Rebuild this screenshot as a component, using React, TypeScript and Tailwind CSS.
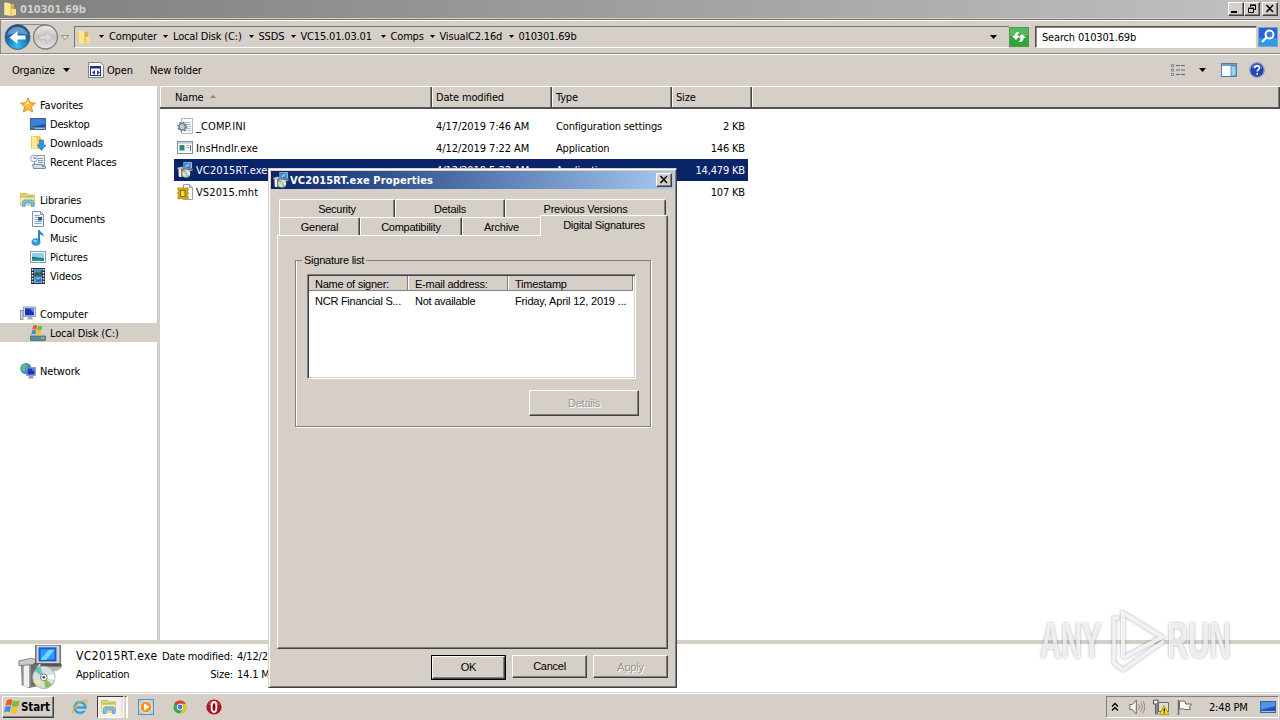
import React from "react";

const SANS = "font-['DejaVu_Sans_Condensed','DejaVu_Sans',sans-serif]";
const MSS = "font-['Liberation_Sans',Arial,sans-serif]";

/* ---------- icons ---------- */
type IconProps = { className?: string };

const Folder = ({ className = "w-4 h-4" }: IconProps) => (
  <svg viewBox="0 0 16 16" className={className}>
    <path d="M2 2h5l1 1v11H2z" fill="#f3cf62" />
    <path d="M7 3h5v11H7z" fill="#e2b43c" />
    <path d="M3 1l6 2v12l-6-1z" fill="#fbe795" />
    <path d="M9 8h5v6l-5 1z" fill="#f7e08d" />
    <path d="M9 3v12" stroke="#d3a534" strokeWidth=".8" />
  </svg>
);
const Star = () => (
  <svg viewBox="0 0 16 16" className="h-4 w-4">
    <path d="M8 .8l2.1 4.9 5.3.5-4 3.6 1.2 5.2L8 12.300 3.400 15l1.200-5.200-4-3.600 5.300-.5z" fill="#fcbf3d" stroke="#e08a1e" strokeWidth="1" />
    <path d="M8 3l1.300 3.600L5 8z" fill="#fff0b0" />
  </svg>
);
const Desktop = () => (
  <svg viewBox="0 0 16 16" className="h-4 w-4">
    <rect x=".5" y="2.500" width="15" height="11" fill="#1c4fa8" stroke="#3c5f96" />
    <path d="M1 3h14v5L1 11z" fill="#3f7fdc" />
    <rect x="1" y="11.500" width="14" height="1.500" fill="#9fb6d4" />
    <rect x="1" y="11.500" width="4" height="1.500" fill="#2d8c4a" />
  </svg>
);
const Downloads = () => (
  <svg viewBox="0 0 16 16" className="h-4 w-4">
    <path d="M1 1h8l2 1v12H1z" fill="#f0c65a" />
    <path d="M2 1l5 2v12l-5-1z" fill="#fce99b" />
    <path d="M9.500 5h4v5H16l-4.500 5.500L7 10h2.500z" fill="#2f93de" stroke="#1c6fb5" strokeWidth=".6" />
  </svg>
);
const Recent = () => (
  <svg viewBox="0 0 16 16" className="h-4 w-4">
    <path d="M4.500 1.500h10v10h-10z" fill="#e9eff5" stroke="#8695a5" />
    <path d="M7 4.500h6M8 6.500h5M8 8.500h5" stroke="#7f9bb8" />
    <circle cx="4" cy="4.500" r="3.400" fill="#f4f7fa" stroke="#93a5b8" />
    <path d="M4 2.500v2h2" stroke="#47617c" fill="none" strokeWidth=".8" />
    <path d="M2.500 10.500h10v2h3v2h-12z" fill="#d2dde8" stroke="#7c8fa2" />
  </svg>
);
const Library = ({ className = "h-4 w-4" }: IconProps) => (
  <svg viewBox="0 0 16 16" className={className}>
    <path d="M.5 1.500h6l1 1.500h7v10H.5z" fill="#f2d16b" stroke="#cfa63c" strokeWidth=".8" />
    <path d="M2 4h11v3H2z" fill="#8fd06a" />
    <path d="M.5 5.500h14v7H.5z" fill="#fbe9a4" />
    <path d="M2.500 14.500v-5l1.500-1.500h8.500l1.500 1.500v5h-2.500v-3.500H5v3.500z" fill="#79c3ee" stroke="#4691c4" strokeWidth=".7" />
  </svg>
);
const Doc = () => (
  <svg viewBox="0 0 16 16" className="h-4 w-4">
    <path d="M2.500.5h8l3 3v12h-11z" fill="#f8fafd" stroke="#7d93a8" />
    <path d="M10.500.5v3h3" fill="none" stroke="#7d93a8" />
    <path d="M4.500 4.500h5M4.500 6.500h3M4.500 8.500h3M4.500 10.500h7M4.500 12.500h7" stroke="#7fa2c8" />
    <rect x="8" y="6" width="4" height="3.500" fill="#28549c" />
  </svg>
);
const Music = () => (
  <svg viewBox="0 0 16 16" className="h-4 w-4">
    <path d="M8 0h1.700c.3 2.500 4.300 2.800 4.100 7-.9-2-2.300-2.400-3.800-2.600V12H8z" fill="#2488cf" />
    <ellipse cx="6" cy="12" rx="4.100" ry="3.300" fill="#2b9be0" stroke="#176dab" strokeWidth=".6" />
    <ellipse cx="5.200" cy="11" rx="2" ry="1.200" fill="#8fd2f8" />
  </svg>
);
const Picture = () => (
  <svg viewBox="0 0 16 16" className="h-4 w-4">
    <rect x=".5" y="2.500" width="15" height="11" fill="#fff" stroke="#8a9bab" />
    <rect x="2" y="4" width="12" height="8" fill="#8cd0f2" />
    <path d="M2 8c3-1 5 1 12 1v3H2z" fill="#1d6f8e" />
    <path d="M2 10c4-1 7 1 12 0v2H2z" fill="#2f9a70" />
  </svg>
);
const Video = () => (
  <svg viewBox="0 0 16 16" className="h-4 w-4">
    <rect x="1" y="0" width="14" height="16" fill="#26303c" />
    <rect x="4" y="1" width="8" height="6.500" fill="#4c93d0" />
    <rect x="4" y="8.500" width="8" height="6.500" fill="#67b2e4" />
    <path d="M4 6l3-3 2 2 3-3v5.500H4z" fill="#315f5c" />
    <path d="M5 9l3 3 3-2v4H6z" fill="#2f6fb4" />
    <path d="M2.500 1v15M13.500 1v15" stroke="#fff" strokeWidth="1.500" strokeDasharray="1.500 1.500" />
  </svg>
);
const Computer = () => (
  <svg viewBox="0 0 16 16" className="h-4 w-4">
    <rect x=".5" y="4.500" width="2.500" height="9" fill="#cfd8df" stroke="#74828f" strokeWidth=".8" />
    <rect x="3.500" y="1" width="12" height="9.500" fill="#d5dbe6" stroke="#7f8da5" strokeWidth=".8" />
    <rect x="5" y="2.300" width="9" height="7" fill="#1b30b9" />
    <path d="M9 2.300h5V7z" fill="#5f80ec" />
    <path d="M8 11h4l1 2.500H7z" fill="#a4afc0" />
  </svg>
);
const Flag = ({ className = "h-4 w-4" }: IconProps) => (
  <svg viewBox="0 0 16 16" className={className}>
    <path d="M2.900 1.300C5 -.2 6.800.2 8.400 1.200L7.200 6.800C5.400 5.800 3.600 5.800 1.500 7z" fill="#ee5a24" />
    <path d="M9.100 1.600c2 1 4.200.9 6.700-.4l-1.500 5.700c-2.200 1.300-4.400 1.300-6.400.3z" fill="#7dbb32" />
    <path d="M1.300 7.900c2-1.300 3.900-1.300 5.700-.2l-1.300 5.600C4 12.200 2.200 12.300 0 13.600z" fill="#3b8ee0" />
    <path d="M7.700 8.200c2 .9 4.200.9 6.400-.3l-1.400 5.700c-2.200 1.200-4.300 1.100-6.300.1z" fill="#fbc21c" />
  </svg>
);
const Disk = () => (
  <svg viewBox="0 0 16 16" className="h-4 w-4">
    <path d="M2 9h12l1.500 3H.5z" fill="#c3ced6" />
    <rect x=".5" y="11" width="15" height="4.500" fill="#5b8a93" stroke="#456570" strokeWidth=".7" />
    <rect x="11" y="12.500" width="3" height="1" fill="#7dff7a" />
    <path d="M3 .8C4.700-.2 5.800 0 7.300.6L6.500 4.500C5 4 3.800 4 2.300 5z" fill="#ee5a24" />
    <path d="M7.900.8c1.500.7 3 .6 4.500-.2l-.8 4.200c-1.500.7-3 .7-4.500 0z" fill="#7dbb32" />
    <path d="M2.100 5.600c1.500-.8 2.800-.8 4.200-.2L5.500 9.500C4.200 8.900 2.900 8.900 1.300 9.800z" fill="#3b8ee0" />
    <path d="M7 5.600c1.500.6 2.900.6 4.400 0l-.8 4.200c-1.400.7-2.900.7-4.300 0z" fill="#fbc21c" />
  </svg>
);
const Network = () => (
  <svg viewBox="0 0 16 16" className="h-4 w-4">
    <circle cx="5.800" cy="5.500" r="5.500" fill="#2b86d8" />
    <path d="M2 2c3-2 5-1 6 1L5 5l1 3-3 1C1 7 1 4 2 2z" fill="#5cc07a" />
    <rect x="6.500" y="4.500" width="9" height="8" fill="#dde4ee" stroke="#6b7c94" strokeWidth=".7" />
    <rect x="7.300" y="5.300" width="7.400" height="6.400" fill="#1c33c3" />
    <path d="M11 5.500h3.500v3.500z" fill="#6b8af0" />
    <path d="M9 13h4l1 2.500H8z" fill="#8f9db0" />
  </svg>
);
const Installer = ({ className = "h-4 w-4" }: IconProps) => (
  <svg viewBox="0 0 48 48" className={className}>
    <path d="M3 19l8-3 9 2v26l-8 2-8-3z" fill="#8a8a8a" />
    <path d="M6 20h6v25l-6-1z" fill="#f0f0f0" />
    <path d="M14 18h8v26h-8z" fill="#6d6d6d" />
    <path d="M1 17l13-3 9 3-8 4-14 1z" fill="#c9c9c9" stroke="#666" strokeWidth=".8" />
    <path d="M20 22h23l4-2v4l-6 4H20z" fill="#b5b5b5" />
    <path d="M24 20h22v3H24z" fill="#555" />
    <path d="M19 0h26v20H19z" fill="#d2d2d8" stroke="#4a4a4a" strokeWidth="1.200" />
    <rect x="22" y="2.500" width="19" height="15" fill="#1457d9" />
    <rect x="24" y="4.500" width="15" height="11" fill="#2f9af5" />
    <path d="M26 13l7-8h6l-9 11h-6z" fill="#6fd6ff" />
    <circle cx="27.500" cy="34.500" r="12" fill="#d7e0dc" stroke="#8c9c98" strokeWidth=".8" />
    <path d="M27.500 34.500L18 28a11 11 0 0 1 6-4.500z" fill="#63c6c0" />
    <path d="M27.500 34.500L36 42a11 11 0 0 1-7 4z" fill="#8dbf57" />
    <path d="M27.500 34.500L38 31a11 11 0 0 1 1 6z" fill="#fff" />
    <path d="M27.500 34.500L17 38a11 11 0 0 0 4 6z" fill="#e8e8a8" />
    <circle cx="27.500" cy="34.500" r="3.600" fill="#fff" stroke="#777" />
    <circle cx="27.500" cy="34.500" r="1.500" fill="#555" />
  </svg>
);
const IniFile = () => (
  <svg viewBox="0 0 16 16" className="h-4 w-4">
    <path d="M4.500.5h11v15h-11z" fill="#f6f8fa" stroke="#98a5b2" strokeDasharray="2 .6" />
    <path d="M7 4.500h7M8 6.500h6M9 8.500h5M9 10.500h5M7 12.500h7" stroke="#b7c3cf" />
    <circle cx="5.200" cy="8.700" r="3.200" fill="#dfe6ec" stroke="#6d7f90" strokeWidth="1.500" />
    <circle cx="5.200" cy="8.700" r="4.600" fill="none" stroke="#6d7f90" strokeWidth="1.200" strokeDasharray="1.600 2" />
    <circle cx="5.200" cy="8.700" r="1.200" fill="#fff" stroke="#6d7f90" strokeWidth=".6" />
  </svg>
);
const ExeFile = () => (
  <svg viewBox="0 0 16 16" className="h-4 w-4">
    <rect x=".5" y="1.500" width="15" height="12" fill="#fff" stroke="#7f8c99" />
    <rect x="1" y="2" width="14" height="2" fill="#cbd6e0" />
    <rect x="2.500" y="5" width="5" height="5.500" fill="#2f8374" />
    <path d="M9 5.500h3M9 7.500h3" stroke="#a9b6c2" />
    <path d="M13.500 5v6" stroke="#4f74b8" />
  </svg>
);
const MhtFile = () => (
  <svg viewBox="0 0 16 16" className="h-4 w-4">
    <path d="M6.500.5h6l3 3v12h-9z" fill="#fbfbfb" stroke="#98a0a8" />
    <path d="M12.500.5v3h3" fill="none" stroke="#98a0a8" />
    <path d="M0 4.500l2-1.500 2 1 2-1 2 1 2-1 2 1.500-1 2.500 1 2-1 2.500 1 3-2 1-2-.8-2 .8-2-.8-2 .8-2-1 1-3-1-2.500 1-2z" fill="#c9a017" />
    <path d="M3.500 6.500h4.500v6H3.500z" fill="#f6d94c" stroke="#8e7010" />
  </svg>
);

const Caret = ({ className = "" }: IconProps) => (
  <svg viewBox="0 0 7 4" className={`h-1 w-[7px] ${className}`}><path d="M0 0h7L3.500 4z" fill="#000" /></svg>
);

/* ---------- explorer window ---------- */
const capBtn = "flex h-[14px] w-4 items-center justify-center border border-t-white border-l-white border-r-[#404040] border-b-[#404040] bg-[#d6cfc8] shadow-[inset_-1px_-1px_0_#808080]";

function TitleBar() {
  return (
    <div className="flex h-[18px] shrink-0 items-center bg-linear-to-r from-[#7f7f7f] to-[#c1c1c1] pl-0.5 pr-[2px]">
      <Folder className="h-4 w-4" />
      <span className="ml-0.5 pt-px text-[11px] font-bold tracking-[0px] text-[#d6cfc8]">010301.69b</span>
      <div className="ml-auto flex">
        <div className={capBtn}><div className="mt-1.5 -ml-1 h-0.5 w-1.5 bg-black" /></div>
        <div className={capBtn}>
          <svg viewBox="0 0 10 10" className="h-[10px] w-[10px]"><path d="M3.500 1v2M3 .9h6M3 1.500h5.500v4H7M1.500 4.500h5v4h-5zM1 4.100h6" fill="none" stroke="#000" /></svg>
        </div>
        <div className={`${capBtn} ml-0.5`}>
          <svg viewBox="0 0 10 10" className="h-[10px] w-[10px]"><path d="M1.500 1l6.500 7M8 1L1.500 8" stroke="#000" strokeWidth="1.500" /></svg>
        </div>
      </div>
    </div>
  );
}

const crumbs = [
  { name: "Computer", w: "w-[64px]" },
  { name: "Local Disk (C:)", w: "w-[85.500px]" },
  { name: "SSDS", w: "w-[42px]" },
  { name: "VC15.01.03.01", w: "w-[90px]" },
  { name: "Comps", w: "w-[49px]" },
  { name: "VisualC2.16d", w: "w-[79px]" },
  { name: "010301.69b", w: "w-[80px]" },
];

function NavBar() {
  return (
    <div className="mt-px flex h-[35px] shrink-0 items-center border-t border-b border-l border-t-[#77736e] border-b-[#8b8680] border-l-[#8b8680] bg-[#d6cfc8] shadow-[inset_0_1px_0_#fff,0_1px_0_#fff]">
      <svg viewBox="0 0 70 28" className="ml-[3px] h-7 w-[70px] shrink-0">
        <defs>
          <radialGradient id="nb" cx=".5" cy=".85" r=".8"><stop offset="0" stopColor="#35c3f5" /><stop offset=".55" stopColor="#1973b8" /><stop offset="1" stopColor="#1a4a86" /></radialGradient>
          <linearGradient id="nf" x1="0" y1="0" x2="0" y2="1"><stop offset="0" stopColor="#ececec" /><stop offset=".5" stopColor="#c6c4c2" /><stop offset="1" stopColor="#e6e4e2" /></linearGradient>
        </defs>
        <path d="M13 1.500h30" stroke="#8f8b86" />
        <circle cx="13.500" cy="14" r="12.500" fill="url(#nb)" stroke="#4c6680" />
        <path d="M3 12a10.800 10.800 0 0 1 21 0c-6-2-15-2-21 0z" fill="#8db9dc" opacity=".65" />
        <path d="M5.500 14.500l8-6.500v4.500h8v4h-8V21z" fill="#fff" />
        <circle cx="41.500" cy="14" r="12" fill="url(#nf)" stroke="#838078" strokeWidth="1.300" />
        <path d="M49 14.500l-7-6v4h-7v4h7v4z" fill="#d8d6d4" stroke="#b4b2b0" strokeWidth=".7" />
        <path d="M57.500 12.500h7l-3.500 4z" fill="#f0eeec" stroke="#85817c" strokeWidth=".9" />
      </svg>
      <div className="flex h-[22px] flex-1 items-center border-t border-b border-l border-t-[#77736e] border-l-[#77736e] border-b-white">
        <Folder className="ml-px h-4 w-4 shrink-0" />
        <div className="ml-[7px] flex items-center">
          {crumbs.map((c) => (
            <div key={c.name} className={`flex items-center whitespace-nowrap ${c.w}`}>
              <svg viewBox="0 0 5 3" className="mr-[5px] h-[3px] w-[5px] shrink-0"><path d="M0 0h5L2.500 3z" fill="#000" /></svg>
              {c.name}
            </div>
          ))}
        </div>
        <Caret className="mr-3 ml-auto" />
      </div>
      <svg viewBox="0 0 20 20" className="h-5 w-5 shrink-0">
        <rect x=".5" y=".5" width="19" height="19" fill="#2fa637" stroke="#5c8f5c" />
        <path d="M1 1h18v8H1z" fill="#63c56a" opacity=".7" />
        <path d="M3 9l4 4 3.500-4H8.500c0-2 .8-3 2-4C7.500 4.500 5.500 6 5.300 9z" fill="#fff" />
        <path d="M17 11l-4-4-3.500 4h2c0 2-.8 3-2 4 3 .5 5-1 5.200-4z" fill="#fff" />
      </svg>
      <div className="ml-[6px] flex h-[22px] w-[222px] shrink-0 items-center border border-t-[#55514d] border-l-[#55514d] border-r-[#d6cfc8] border-b-white bg-white pt-0.5 pl-[6px] shadow-[inset_1px_1px_0_#8b8680]">
        Search 010301.69b
      </div>
      <svg viewBox="0 0 20 20" className="ml-px mr-0.5 h-5 w-5 shrink-0">
        <rect x=".5" y=".5" width="19" height="19" fill="#2363d6" stroke="#7f9fd0" />
        <path d="M1 11h18v8H1z" fill="#36b0f0" opacity=".7" />
        <circle cx="11.500" cy="7.500" r="4" fill="#3d78d8" stroke="#fff" strokeWidth="2" />
        <path d="M8.500 10.500L4 15" stroke="#fff" strokeWidth="2.200" />
      </svg>
    </div>
  );
}

function Toolbar() {
  return (
    <div className="flex h-[31px] shrink-0 items-center pt-px pl-3">
      <span className="w-[51px] pt-0.5 whitespace-nowrap">Organize</span>
      <Caret />
      <svg viewBox="0 0 16 16" className="ml-[18px] h-4 w-4">
        <path d="M.5.5h12l3 3v12H.5z" fill="#f7f9fc" stroke="#7a8290" />
        <rect x="2.500" y="4.500" width="10" height="9" fill="#fff" stroke="#1d3285" />
        <rect x="2" y="4" width="11" height="2.500" fill="#1d3285" />
        <path d="M4 10.500l3-2.500v5zM9 8l3 2.500L9 13z" fill="#26408f" />
      </svg>
      <span className="ml-[3px] w-[43px] pt-0.5">Open</span>
      <span className="pt-0.5 whitespace-nowrap">New folder</span>
      <svg viewBox="0 0 16 14" className="ml-auto h-[14px] w-4">
        <path d="M1.500 1.500h2v2h-2zM1.500 6h2v2h-2zM1.500 10.500h2v2h-2z" fill="#fff" stroke="#6f7681" strokeWidth=".9" />
        <path d="M6 2.500h4M11 2.500h4M6 7h4M11 7h4M6 11.500h4M11 11.500h4" stroke="#5d6672" />
      </svg>
      <Caret className="ml-[13px]" />
      <svg viewBox="0 0 16 14" className="ml-[15px] h-[14px] w-4">
        <rect x=".5" y=".5" width="15" height="13" fill="#fff" stroke="#4f7fa8" />
        <rect x="1" y="1" width="14" height="2" fill="#6ba0c8" />
        <rect x="10" y="3" width="5" height="10" fill="#9fd0ee" stroke="#4f7fa8" strokeWidth=".8" />
      </svg>
      <svg viewBox="0 0 16 16" className="mr-[15px] ml-3 h-4 w-4">
        <circle cx="8" cy="8" r="7.300" fill="#2346b4" stroke="#8fa0c4" strokeWidth="1.300" />
        <path d="M2.500 6a6 6 0 0 1 11 0c-3-1.500-8-1.500-11 0z" fill="#7f9fe6" opacity=".7" />
        <path d="M5.700 6.200c0-3.100 4.700-3 4.700-.3 0 1.700-2.200 1.800-2.200 3.700M8.200 11v1.700" stroke="#fff" strokeWidth="1.600" fill="none" />
      </svg>
    </div>
  );
}

function NavRow({ icon, label, child, selected }: { icon: React.ReactNode; label: string; child?: boolean; selected?: boolean }) {
  return (
    <div className={`flex h-[19px] items-center gap-1 whitespace-nowrap ${child ? "pl-[30px]" : "pl-5"} ${selected ? "bg-[#d6cfc8]" : ""}`}>
      {icon}
      <span className="pt-[3px]">{label}</span>
    </div>
  );
}

function Sidebar() {
  return (
    <div className="flex w-[160px] shrink-0 flex-col gap-[19px] bg-linear-to-r from-white from-[157px] to-[#d6cfc8] to-[157px] pt-[9px]">
      <div>
        <NavRow icon={<Star />} label="Favorites" />
        <NavRow child icon={<Desktop />} label="Desktop" />
        <NavRow child icon={<Downloads />} label="Downloads" />
        <NavRow child icon={<Recent />} label="Recent Places" />
      </div>
      <div>
        <NavRow icon={<Library />} label="Libraries" />
        <NavRow child icon={<Doc />} label="Documents" />
        <NavRow child icon={<Music />} label="Music" />
        <NavRow child icon={<Picture />} label="Pictures" />
        <NavRow child icon={<Video />} label="Videos" />
      </div>
      <div>
        <NavRow icon={<Computer />} label="Computer" />
        <NavRow child selected icon={<Disk />} label="Local Disk (C:)" />
      </div>
      <NavRow icon={<Network />} label="Network" />
    </div>
  );
}

const files = [
  { icon: <IniFile />, name: "_COMP.INI", date: "4/17/2019 7:46 AM", type: "Configuration settings", size: "2 KB" },
  { icon: <ExeFile />, name: "InsHndlr.exe", date: "4/12/2019 7:22 AM", type: "Application", size: "146 KB" },
  { icon: <Installer />, name: "VC2015RT.exe", date: "4/12/2019 5:22 AM", type: "Application", size: "14,479 KB", selected: true },
  { icon: <MhtFile />, name: "VS2015.mht", date: "", type: "", size: "107 KB" },
];

const th = "flex h-full items-center border-r border-r-[#404040] shadow-[inset_1px_0_0_#fff,inset_-1px_0_0_#808080] pt-0.5";

function FileList() {
  return (
    <div className="flex-1 bg-white">
      <div className="flex h-[23px] items-center border-t border-b-2 border-t-white border-b-[#55514d] bg-[#d6cfc8]">
        <div className={`${th} w-[272px] pl-[15px]`}>
          Name
          <svg viewBox="0 0 6 3" className="mb-1 ml-1.5 h-[3px] w-1.5"><path d="M0 3h6L3 0z" fill="#8b8680" /></svg>
        </div>
        <div className={`${th} w-[120px] pl-1`}>Date modified</div>
        <div className={`${th} w-[120px] pl-1`}>Type</div>
        <div className={`${th} w-[80px] pl-1`}>Size</div>
        <div className={`${th} flex-1`} />
      </div>
      <div className="mt-[6px] ml-[14px] w-[574px]">
        {files.map((f) => (
          <div key={f.name} className={`flex h-[22px] items-center whitespace-nowrap ${f.selected ? "bg-[#0a246a] text-white" : ""}`}>
            <div className="flex w-[262px] items-center gap-[3px] pl-[3px]">{f.icon}<span className="pt-0.5 tracking-[0.1px]">{f.name}</span></div>
            <div className="w-[120px] pt-0.5 tracking-[-0.08px]">{f.date}</div>
            <div className="w-[120px] pt-0.5">{f.type}</div>
            <div className="w-[69px] pt-0.5 text-right">{f.size}</div>
          </div>
        ))}
      </div>
    </div>
  );
}

function DetailsPane() {
  return (
    <div className="flex h-[48px] shrink-0 border-t border-white bg-white">
      <Installer className="ml-[18px] h-[45px] w-[45px] shrink-0" />
      <div className="ml-[13px] flex w-[86px] flex-col pt-[3px] whitespace-nowrap">
        <span className="text-[12px] leading-[17px] tracking-[0.4px]">VC2015RT.exe</span>
        <span className="leading-[19px]">Application</span>
      </div>
      <div className="flex w-[71px] flex-col items-end pt-[3px] whitespace-nowrap">
        <span className="leading-[17px]">Date modified:</span>
        <span className="leading-[19px]">Size:</span>
      </div>
      <div className="ml-1 flex flex-col pt-[3px] whitespace-nowrap">
        <span className="leading-[17px]">4/12/2019 5:22 AM</span>
        <span className="leading-[19px]">14.1 MB</span>
      </div>
    </div>
  );
}

/* ---------- properties dialog ---------- */
const tab = "flex items-center justify-center rounded-t-[2px] border-t border-l border-r border-t-white border-l-white border-r-[#404040] bg-[#d6cfc8] shadow-[inset_-1px_0_0_#808080]";
const btn = "flex h-[23px] items-center justify-center border border-t-white border-l-white border-r-[#404040] border-b-[#404040] shadow-[inset_-1px_-1px_0_#808080]";

function PropertiesDialog() {
  return (
    <div className={`absolute top-[168px] left-[268px] flex h-[520px] w-[409px] flex-col border border-t-[#d6cfc8] border-l-[#d6cfc8] border-r-[#404040] border-b-[#404040] bg-[#d6cfc8] p-0.5 shadow-[inset_1px_1px_0_#fff,inset_-1px_-1px_0_#808080] ${MSS} text-[11px] tracking-[-0.25px]`}>
      <div className="flex h-[18px] shrink-0 items-center bg-linear-to-r from-[#0a246a] to-[#a6caf0] pr-0.5 pl-0.5">
        <Installer className="h-4 w-4" />
        <span className={`ml-px pt-px ${SANS} font-bold tracking-[0.13px] whitespace-nowrap text-white`}>VC2015RT.exe Properties</span>
        <div className={`${capBtn} ml-auto`}>
          <svg viewBox="0 0 10 10" className="h-[10px] w-[10px]"><path d="M1.500 1l6.500 7M8 1L1.500 8" stroke="#000" strokeWidth="1.500" /></svg>
        </div>
      </div>
      <div className="mt-2.5 ml-2 flex h-[18px] shrink-0">
        <div className={`${tab} w-[116px]`}>Security</div>
        <div className={`${tab} w-[110px]`}>Details</div>
        <div className={`${tab} w-[161px]`}>Previous Versions</div>
      </div>
      <div className="ml-2 flex h-[18px] shrink-0 items-end">
        <div className={`${tab} h-[18px] w-[81px] pt-px`}>General</div>
        <div className={`${tab} h-[18px] w-[102px] pt-px`}>Compatibility</div>
        <div className="flex h-[18px] w-[78px] items-center justify-center border-t border-l border-white pt-px">Archive</div>
        <div className={`${tab} relative z-10 -mb-px h-[21px] w-[128px] pb-[3px]`}>Digital Signatures</div>
      </div>
      <div className="ml-1.5 flex h-[414px] w-[391px] shrink-0 flex-col border border-t-white border-l-white border-r-[#404040] border-b-[#404040] pt-[17px] pl-[17px] shadow-[inset_-1px_-1px_0_#808080]">
        <fieldset className="flex h-[174px] w-[356px] flex-col border border-[#808080] pl-[11px] shadow-[1px_1px_0_#fff,inset_1px_0_0_#fff]">
          <legend className="-ml-[5px] h-[14px] px-[2px] leading-[14px] whitespace-nowrap">Signature list</legend>
          <div className="mt-[7px] flex h-[105px] w-[329px] shrink-0 flex-col border border-t-[#808080] border-l-[#808080] border-r-white border-b-white bg-white shadow-[inset_1px_1px_0_#404040,inset_-1px_-1px_0_#d6cfc8]">
            <div className="mt-px mr-0.5 ml-px flex h-[15px] border-b border-[#808080] bg-[#d6cfc8] leading-[16px]">
              <div className="w-[99px] border-r border-[#808080] pl-1.5">Name of signer:</div>
              <div className="w-[100px] border-r border-l border-r-[#808080] border-l-white pl-1.5">E-mail address:</div>
              <div className="flex-1 border-r border-l border-r-[#808080] border-l-white pl-1.5">Timestamp</div>
            </div>
            <div className="ml-px flex h-[19px] items-center whitespace-nowrap">
              <div className="w-[99px] pl-1.5">NCR Financial S...</div>
              <div className="w-[100px] pl-[7px]">Not available</div>
              <div className="pl-[7px] tracking-[-0.15px]">Friday, April 12, 2019 ...</div>
            </div>
          </div>
          <div className={`${btn} mt-[11px] ml-[222px] h-[26px] w-[110px] shrink-0 text-[#9a958f]`}><span className="[text-shadow:1px_1px_0_#fff]">Details</span></div>
        </fieldset>
      </div>
      <div className="mt-[6px] flex justify-end gap-[6px] pr-1.5">
        <div className="w-[75px] border border-black"><div className={`${btn} h-[21px] pb-px`}>OK</div></div>
        <div className={`${btn} w-[75px] pb-px`}>Cancel</div>
        <div className={`${btn} w-[75px] text-[#9a958f]`}><span className="[text-shadow:1px_1px_0_#fff]">Apply</span></div>
      </div>
    </div>
  );
}

/* ---------- taskbar ---------- */
function Taskbar() {
  return (
    <div className="flex h-[28px] shrink-0 items-center border-t border-t-[#d6cfc8] bg-[#d6cfc8] pt-px shadow-[inset_0_1px_0_#fff]">
      <div className="ml-0.5 flex h-[22px] w-[52px] items-center border border-t-white border-l-white border-r-[#404040] border-b-[#404040] pl-px shadow-[inset_-1px_-1px_0_#808080]">
        <Flag className="h-4 w-4 shrink-0" />
        <span className="ml-px text-[11.500px] font-bold tracking-[-0.1px]">Start</span>
      </div>
      <svg viewBox="0 0 16 16" className="ml-[18px] h-4 w-4">
        <circle cx="8" cy="8.500" r="5.300" fill="none" stroke="#3a9ee0" strokeWidth="2.800" />
        <path d="M4.500 7.200h8v2.600h-8z" fill="#3a9ee0" />
        <path d="M9 10h6v1.700H9z" fill="#d6cfc8" />
        <path d="M1 14.500C-1 11 6 3 11.500 1.200c3-1 4 .6 3 3" fill="none" stroke="#e9b530" strokeWidth="1.300" />
      </svg>
      <div className="ml-[9px] flex h-[22px] w-[24px] items-center border border-r-0 border-t-[#404040] border-l-[#404040] border-b-white bg-[#f2efec] pl-[3px]">
        <Library className="h-4 w-4" />
      </div>
      <div className="flex h-[22px] w-[7px] gap-px border-r border-r-white">
        <div className="w-[3px] border-t border-r border-t-[#404040] border-r-white bg-[#e8e4e0]" />
        <div className="w-[2px] border-t border-r border-t-[#404040] border-r-white" />
      </div>
      <svg viewBox="0 0 16 16" className="ml-2.5 h-4 w-4">
        <rect x=".5" y=".5" width="15" height="15" fill="#a8d2f2" stroke="#5b93c4" />
        <circle cx="8" cy="8" r="6" fill="#f7941e" stroke="#fff" strokeWidth=".8" />
        <path d="M6 4.500l5.500 3.500L6 11.500z" fill="#fff" />
      </svg>
      <svg viewBox="0 0 16 16" className="ml-[19px] h-[14px] w-[14px]">
        <circle cx="8" cy="8" r="7.500" fill="#3aa757" />
        <path d="M8 8L1.500 4.200A7.500 7.500 0 0 1 14.500 4.300H8z" fill="#e33b2e" />
        <path d="M8 4.300h6.500A7.500 7.500 0 0 1 8 15.500L11.200 9.900z" fill="#fbc116" />
        <circle cx="8" cy="8" r="3.600" fill="#fff" />
        <circle cx="8" cy="8" r="2.800" fill="#3f7fe8" />
      </svg>
      <svg viewBox="0 0 16 16" className="ml-[19px] h-4 w-4">
        <circle cx="8" cy="8" r="7.600" fill="#b3121b" />
        <path d="M2 6a6.500 6.500 0 0 1 12 0z" fill="#e2555a" opacity=".6" />
        <ellipse cx="8" cy="8" rx="2.400" ry="5" fill="#7a0a10" stroke="#fff" strokeWidth="1.900" />
      </svg>
      <div className="ml-auto flex h-[22px] w-[173px] items-center border border-t-[#808080] border-l-[#808080] border-r-white border-b-white pl-[4px]">
        <svg viewBox="0 0 8 10" className="h-2.5 w-2"><path d="M1 4.500l3-3 3 3M1 8.500l3-3 3 3" fill="none" stroke="#000" strokeWidth="1.300" /></svg>
        <svg viewBox="0 0 16 16" className="ml-[10px] h-4 w-4">
          <path d="M.8 5.500h2.500l4-4.500v14l-4-4.500H.8z" fill="#f7f5f3" stroke="#6f6b67" />
          <path d="M9.500 5.500c1.300 1.500 1.300 3.500 0 5M11.500 3.500c2.300 2.500 2.300 6.500 0 9M13.500 1.800c3 3.500 3 9 0 12.500" fill="none" stroke="#8b8680" />
        </svg>
        <svg viewBox="0 0 16 16" className="ml-2 h-4 w-4">
          <path d="M5.500 3.500h10v9h-10z" fill="#dfdcd8" stroke="#6f6b67" />
          <path d="M.5 1v4h4.500V1" fill="#f7f5f3" stroke="#4f4b47" />
          <path d="M2.700 5v10.500M2 0v2M4 0v2M4.200 6v9.500" fill="none" stroke="#4f4b47" />
          <path d="M11 6.500l5 9H6.500z" fill="#ffd91a" stroke="#a08200" strokeWidth=".7" />
          <path d="M11.200 9.500v3M11.200 13.500v1" stroke="#000" strokeWidth="1.200" />
        </svg>
        <svg viewBox="0 0 16 16" className="ml-2 h-4 w-4">
          <path d="M1.500 1v15" stroke="#6f6b67" strokeWidth="1.500" />
          <path d="M2.500 2.500c2-1 4-.5 6 .5v2h6l-2 3 1 2.500H8c-2-1-4-1-5.500 0z" fill="#fbfaf9" stroke="#6f6b67" />
        </svg>
        <span className="ml-4 w-[51px] pt-px whitespace-nowrap">2:48 PM</span>
        <svg viewBox="0 0 16 14" className="h-3.5 w-4">
          <rect x=".5" y="1.500" width="15" height="11" fill="#1c56b4" stroke="#38659f" />
          <path d="M1 2h14v4L1 10z" fill="#4f93e6" />
          <path d="M1 11.500h14" stroke="#9fc0e4" />
        </svg>
      </div>
      <div className="w-px" />
    </div>
  );
}

function Watermark() {
  return (
    <div className="pointer-events-none absolute top-[606px] left-[1040px] flex h-[70px] w-[194px] items-center font-['Liberation_Sans',sans-serif] text-[50px] leading-none font-bold tracking-normal text-white/75 [filter:drop-shadow(0_0_1.500px_rgba(0,0,0,.3))_drop-shadow(0_0_1px_rgba(0,0,0,.15))]">
      <span className="w-[69px]"><span className="inline-block origin-left scale-x-[.58]">ANY</span></span>
      <svg viewBox="0 0 58 66" className="h-[66px] w-[58px] shrink-0" fill="none" stroke="#fff" strokeOpacity=".8" strokeWidth="4">
        <path d="M14 50V5l39 24L14 50" />
        <path d="M10 10H5v45l9 7L55 33" strokeWidth="3.500" />
      </svg>
      <span className="w-[63px]"><span className="inline-block origin-left scale-x-[.59]">RUN</span></span>
    </div>
  );
}

export default function App() {
  return (
    <div className={`relative flex h-[720px] w-[1280px] flex-col overflow-hidden bg-[#d6cfc8] ${SANS} text-[11px] leading-[14px] tracking-[-0.17px] text-black`}>
      <TitleBar />
      <NavBar />
      <Toolbar />
      <div className="mt-px flex min-h-0 flex-1">
        <Sidebar />
        <FileList />
      </div>
      <div className="h-1 shrink-0" />
      <DetailsPane />
      <Taskbar />
      <PropertiesDialog />
      <Watermark />
    </div>
  );
}
